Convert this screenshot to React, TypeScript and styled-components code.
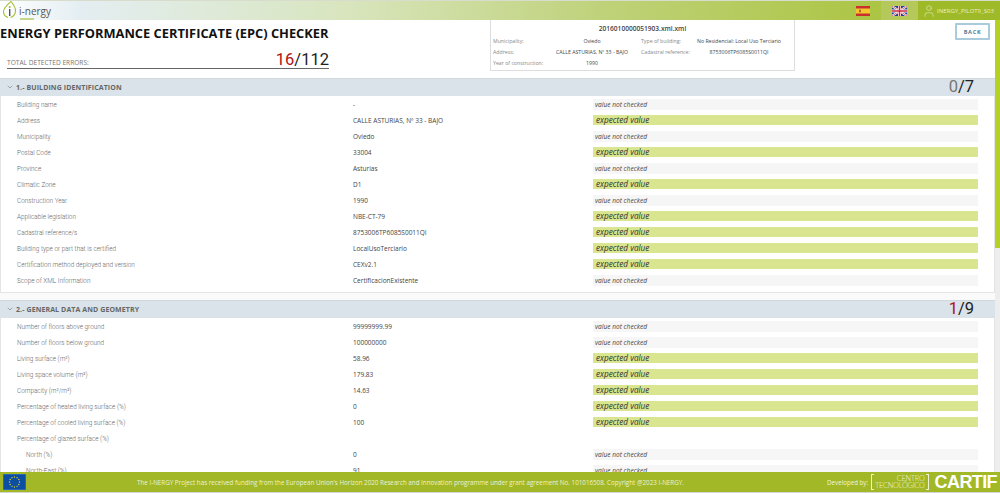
import React from "react";
import styled, { createGlobalStyle } from "styled-components";
import { User, ChevronDown } from "lucide-react";

const Global = createGlobalStyle`
  html, body { margin: 0; padding: 0; height: 100%; overflow: hidden; background: #fff; }
  #root { height: 100vh; }
  * { box-sizing: border-box; }
`;

const Page = styled.div`
  height: 493px; display: flex; flex-direction: column; overflow: hidden;
  font-family: "Open Sans", "Noto Sans", sans-serif; color: #444;
`;
const TopBar = styled.header`
  flex: 0 0 20px; display: flex; align-items: center; justify-content: space-between;
  background: linear-gradient(90deg, #fff 0%, #e4eef2 8%, #d8e5bd 35%, #bfd27a 60%, #a4bf2c 100%);
  border-top: 1px solid #d8dccc;
`;
const Logo = styled.div`
  display: flex; align-items: center; gap: 1px; padding-left: 2px; position: relative;
  font: 400 10px "Open Sans", sans-serif; color: #555;
`;
const LogoTag = styled.i`
  position: absolute; left: 20px; bottom: 0; width: 14px; height: 2px; background: #c3d88a;
`;
const TopRight = styled.div`display: flex; align-items: stretch; height: 100%;`;
const FlagCell = styled.div<{ $on?: boolean }>`
  width: 37px; display: flex; align-items: center; justify-content: center;
  background: ${p => (p.$on ? "#b4c95a" : "transparent")};
`;
const UserCell = styled.div`
  width: 82px; display: flex; align-items: center; gap: 1px; padding-left: 4px;
  background: #9fba28; color: #e8efc9; font-size: 6.1px; white-space: nowrap;
`;
const Body = styled.div`flex: 1; min-height: 0; display: flex; overflow: hidden;`;
const Main = styled.main`flex: 1; min-width: 0; overflow: hidden; background: #fafafa;`;
const Scroll = styled.div`flex: 0 0 5px; background: #ededed;`;
const Thumb = styled.div`height: 228px; background: #b5d126;`;
const Head = styled.section`
  height: 58px; display: flex; background: #fff; padding: 0 5px 0 0;
`;
const HeadLeft = styled.div`width: 329px;`;
const Title = styled.h1`
  margin: 4px 0 0; font: 700 12.85px/18px "Open Sans", sans-serif; color: #111; white-space: nowrap;
`;
const ErrorLine = styled.div`
  margin: 7px 0 0 7px; height: 20px; display: flex; justify-content: space-between; align-items: flex-end;
  border-bottom: 1px solid #666;
`;
const ErrLabel = styled.span`font-size: 6.6px; color: #777; line-height: 11px;`;
const Big = styled.span`font: 400 16.5px/16px "Roboto", sans-serif; color: #222;`;
const Red = styled.span`color: #b01116;`;
const Gray = styled.span`color: #777;`;
const Info = styled.div`
  width: 305px; height: 51px; margin-left: 161px; border: 1px solid #ddd; border-top: none; padding: 0 2px;
  display: flex; flex-direction: column; background: #fff;
`;
const FileName = styled.div`text-align: center; font-size: 6.6px; font-weight: 600; line-height: 10px; margin-top: 4px; color: #444;`;
const InfoGrid = styled.div`
  display: grid; grid-template-columns: 50px 98px 58px 80px; grid-auto-rows: 11px; margin-top: 1px;
  font-size: 5.2px; align-items: center;
`;
const InfoKey = styled.span`color: #888; white-space: nowrap;`;
const InfoVal = styled.span`color: #444; text-align: center; white-space: nowrap; justify-self: center;`;
const Spacer = styled.div`flex: 1;`;
const Back = styled.button`
  width: 35px; height: 17px; margin-top: 3px; background: #fff; border: 2px solid #a9cbdc; border-radius: 1px;
  font: 700 5.6px "Open Sans", sans-serif; color: #4c7f98; letter-spacing: .7px; padding: 0;
`;
const Card = styled.section`
  margin-bottom: 7px; background: #fff; border: 1px solid #e4e4e4; border-width: 0 1px 1px 1px;
`;
const SecHead = styled.div`
  height: 18px; display: flex; align-items: center; justify-content: space-between; background: #d9e3e9;
  border-top: 1px solid #d0d8dd; padding: 0 21px 1px 6px; margin: 0 -1px;
`;
const SecTitle = styled.div`
  display: flex; align-items: center; gap: 2px; font-size: 7px; font-weight: 700; color: #666; letter-spacing: .1px;
`;
const Rows = styled.div`padding: 0 0 4px;`;
const Row = styled.div<{ $sub?: boolean }>`
  height: 16px; display: grid; align-items: center;
  padding-left: ${p => (p.$sub ? "25px" : "16px")};
  grid-template-columns: ${p => (p.$sub ? "327px" : "336px")} 240px 385px;
`;
const Label = styled.span`font: 300 6.4px "Roboto", sans-serif; color: #666; white-space: nowrap; padding-top: 1px;`;
const Val = styled.span`font-size: 6.5px; color: #444; white-space: nowrap;`;
const Check = styled.span<{ $ok?: boolean }>`
  height: ${p => (p.$ok ? "10px" : "11px")}; line-height: ${p => (p.$ok ? "10px" : "11px")};
  padding-left: ${p => (p.$ok ? "3px" : "2px")};
  background: ${p => (p.$ok ? "#d9e68f" : "#f6f6f6")};
  font-style: italic; font-size: ${p => (p.$ok ? "8.2px" : "6.6px")}; color: ${p => (p.$ok ? "#333" : "#444")};
  white-space: nowrap;
`;
const Footer = styled.footer`
  flex: 0 0 21px; display: flex; align-items: center; justify-content: space-between;
  background: #a2b826; border-bottom: 1px solid #d5d5d5; color: #eef2d6; padding: 0 3px;
`;
const FootText = styled.div`flex: 1; font-size: 6.25px; padding-left: 111px; white-space: nowrap;`;
const Dev = styled.div`display: flex; align-items: center; gap: 3px; font-size: 6.2px; color: #f2f5df; white-space: nowrap;`;
const Centro = styled.div`
  font: 300 7.4px/7px "Lato", sans-serif; letter-spacing: -.25px; text-align: right;
  border: 1px solid #eef2d6; border-width: 0 1px; padding: 1px 3px; margin-right: 3px;
  background:
    linear-gradient(#eef2d6, #eef2d6) 0 0 / 2px 1px no-repeat,
    linear-gradient(#eef2d6, #eef2d6) 0 100% / 2px 1px no-repeat,
    linear-gradient(#eef2d6, #eef2d6) 100% 0 / 2px 1px no-repeat,
    linear-gradient(#eef2d6, #eef2d6) 100% 100% / 2px 1px no-repeat;
`;
const Cartif = styled.span`font: 700 18px/18px "Liberation Sans", sans-serif; color: #fff; letter-spacing: -.6px;`;

const Eu = () => (
  <svg width="23" height="16" viewBox="0 0 23 16">
    <rect width="23" height="16" fill="#0b4ea2" stroke="#4a7fbe" />
    {Array.from({ length: 12 }).map((_, i) => {
      const a = (i / 12) * Math.PI * 2;
      return <circle key={i} cx={11.5 + 5 * Math.cos(a)} cy={8 + 5 * Math.sin(a)} r=".7" fill="#e3d13a" />;
    })}
  </svg>
);
const Leaf = () => (
  <svg width="16" height="19" viewBox="0 0 16 19" fill="none">
    <path d="M6 16.5C3 15.500 1.500 13 1.500 10.500 1.500 7 5 4 9 0.500c2.500 3 4.500 5.500 4.500 9 0 3.500-2 6-5 7" stroke="#a4bf2c" strokeWidth="1.100" />
    <rect x="7" y="8" width="1.400" height="7" fill="#555" />
    <circle cx="7.700" cy="6" r="1" fill="#a4bf2c" />
  </svg>
);
const Es = () => (
  <svg width="14" height="10" viewBox="0 0 14 10">
    <rect width="14" height="10" fill="#c9302c" /><rect y="2.500" width="14" height="5" fill="#f2c82e" />
    <rect x="3" y="3.700" width="2" height="2.600" fill="#b5642a" />
  </svg>
);
const Uk = () => (
  <svg width="15" height="10" viewBox="0 0 15 10">
    <rect width="15" height="10" fill="#24418f" />
    <path d="M0 0l15 10M15 0L0 10" stroke="#fff" strokeWidth="2" />
    <path d="M0 0l15 10M15 0L0 10" stroke="#c8283c" strokeWidth=".7" />
    <path d="M7.500 0v10M0 5h15" stroke="#fff" strokeWidth="3" />
    <path d="M7.500 0v10M0 5h15" stroke="#c8283c" strokeWidth="1.600" />
  </svg>
);

type R = [string, string, boolean, boolean?];
const sec1: R[] = [
  ["Building name", "-", false],
  ["Address", "CALLE ASTURIAS, Nº 33 - BAJO", true],
  ["Municipality", "Oviedo", false],
  ["Postal Code", "33004", true],
  ["Province", "Asturias", false],
  ["Climatic Zone", "D1", true],
  ["Construction Year", "1990", false],
  ["Applicable legislation", "NBE-CT-79", true],
  ["Cadastral reference/s", "8753006TP6085S0011QI", true],
  ["Building type or part that is certified", "LocalUsoTerciario", true],
  ["Certification method deployed and version", "CEXv2.1", true],
  ["Scope of XML Information", "CertificacionExistente", false],
];
const sec2: R[] = [
  ["Number of floors above ground", "99999999.99", false],
  ["Number of floors below ground", "100000000", false],
  ["Living surface (m²)", "58.96", true],
  ["Living space volume (m³)", "179.83", true],
  ["Compacity (m²/m³)", "14.63", true],
  ["Percentage of heated living surface (%)", "0", true],
  ["Percentage of cooled living surface (%)", "100", true],
];
const sub: R[] = [
  ["North (%)", "0", false, true],
  ["North-East (%)", "91", false, true],
];

const DataRow = ({ r }: { r: R }) => (
  <Row $sub={r[3]}>
    <Label>{r[0]}</Label>
    <Val>{r[1]}</Val>
    <Check $ok={r[2]}>{r[2] ? "expected value" : "value not checked"}</Check>
  </Row>
);
const Section = ({ title, score, children }: { title: string; score: React.ReactNode; children: React.ReactNode }) => (
  <Card>
    <SecHead>
      <SecTitle><ChevronDown size={8} strokeWidth={1.5} />{title}</SecTitle>
      <Big>{score}</Big>
    </SecHead>
    <Rows>{children}</Rows>
  </Card>
);

export default function App() {
  return (
    <Page>
      <Global />
      <TopBar>
        <Logo><Leaf />i-nergy<LogoTag /></Logo>
        <TopRight>
          <FlagCell><Es /></FlagCell>
          <FlagCell $on><Uk /></FlagCell>
          <UserCell><User size={14} strokeWidth={1} />INERGY_PILOT9_S03</UserCell>
        </TopRight>
      </TopBar>
      <Body>
        <Main>
          <Head>
            <HeadLeft>
              <Title>ENERGY PERFORMANCE CERTIFICATE (EPC) CHECKER</Title>
              <ErrorLine>
                <ErrLabel>TOTAL DETECTED ERRORS:</ErrLabel>
                <Big><Red>16</Red>/112</Big>
              </ErrorLine>
            </HeadLeft>
            <Info>
              <FileName>2016010000051903.xml.xml</FileName>
              <InfoGrid>
                <InfoKey>Municipality:</InfoKey><InfoVal>Oviedo</InfoVal>
                <InfoKey>Type of building:</InfoKey><InfoVal>No Residencial: Local Uso Terciario</InfoVal>
                <InfoKey>Address:</InfoKey><InfoVal>CALLE ASTURIAS, Nº 33 - BAJO</InfoVal>
                <InfoKey>Cadastral reference:</InfoKey><InfoVal>8753006TP6085S0011QI</InfoVal>
                <InfoKey>Year of construction:</InfoKey><InfoVal>1990</InfoVal>
              </InfoGrid>
            </Info>
            <Spacer />
            <Back>BACK</Back>
          </Head>
          <Section title="1.- BUILDING IDENTIFICATION" score={<><Gray>0</Gray>/7</>}>
            {sec1.map(r => <DataRow key={r[0]} r={r} />)}
          </Section>
          <Section title="2.- GENERAL DATA AND GEOMETRY" score={<><Red>1</Red>/9</>}>
            {sec2.map(r => <DataRow key={r[0]} r={r} />)}
            <Row><Label>Percentage of glazed surface (%)</Label></Row>
            {sub.map(r => <DataRow key={r[0]} r={r} />)}
          </Section>
        </Main>
        <Scroll><Thumb /></Scroll>
      </Body>
      <Footer>
        <Eu />
        <FootText>The I-NERGY Project has received funding from the European Union's Horizon 2020 Research and Innovation programme under grant agreement No. 101016508. Copyright @2023 I-NERGY.</FootText>
        <Dev>Developed by:<Centro>CENTRO<br />TECNOLÓGICO</Centro><Cartif>CARTIF</Cartif></Dev>
      </Footer>
    </Page>
  );
}
